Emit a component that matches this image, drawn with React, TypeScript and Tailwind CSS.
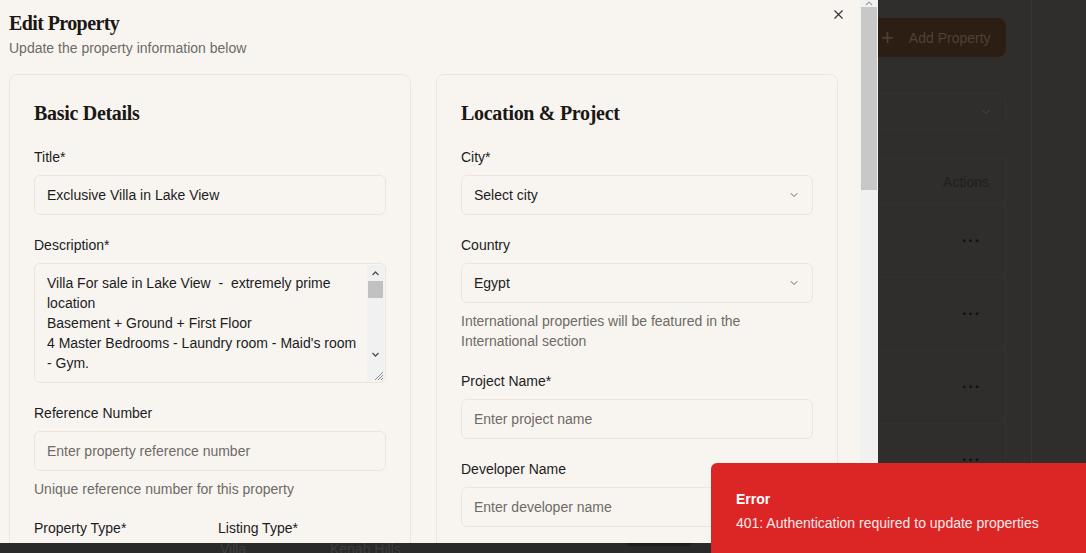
import React from 'react'

const sans = { fontFamily: '"Liberation Sans", Arial, sans-serif' }
const serif = { fontFamily: '"Liberation Serif", "Times New Roman", serif' }

const Chevron = () => (
  <svg width="12" height="12" viewBox="0 0 24 24" fill="none" stroke="#6b6b6b" strokeWidth="2" strokeLinecap="round" strokeLinejoin="round">
    <path d="m6 9 6 6 6-6" />
  </svg>
)

const Label = ({ children }: { children: React.ReactNode }) => (
  <div className='text-sm leading-5 text-[#1c1c1c] mb-2'>{children}</div>
)

const Input = ({ value, placeholder }: { value?: string; placeholder?: string }) => (
  <div className='h-10 rounded-md border border-[#ebe5de] bg-[#f8f5f1] px-3 flex items-center text-sm'>
    {value ? <span className='text-[#1c1c1c]'>{value}</span> : <span className='text-[#6e6a66]'>{placeholder}</span>}
  </div>
)

const Select = ({ value }: { value: string }) => (
  <div className='h-10 rounded-md border border-[#ebe5de] bg-[#f8f5f1] px-3 flex items-center justify-between text-sm text-[#1c1c1c]'>
    <span>{value}</span>
    <Chevron />
  </div>
)

const Help = ({ children }: { children: React.ReactNode }) => (
  <div className='text-sm leading-5 text-[#6e6a66] mt-2'>{children}</div>
)

const Description = () => (
  <div className='relative h-[120px] rounded-md border border-[#ebe5de] bg-[#f8f5f1] flex overflow-hidden'>
    <div className='flex-1 pl-3 pt-[9px] text-sm leading-5 text-[#1c1c1c] whitespace-pre'>
      {'Villa For sale in Lake View  -  extremely prime\nlocation\nBasement + Ground + First Floor\n4 Master Bedrooms - Laundry room - Maid\'s room\n- Gym.'}
    </div>
    <div className='w-[17px] mt-[1px] mb-[1px] mr-[1px] flex flex-col items-center bg-[#f1f1f1]'>
      <svg width="9" height="16" viewBox="0 0 9 16"><path d="M1.5 10 4.5 7 7.5 10" fill="none" stroke="#505050" strokeWidth="1.3" /></svg>
      <div className='w-[15px] h-[17px] bg-[#c1c1c1]' />
      <div className='flex-1' />
      <svg width="9" height="16" viewBox="0 0 9 16" className='mb-[18px]'><path d="M1.5 6 4.5 9 7.5 6" fill="none" stroke="#505050" strokeWidth="1.3" /></svg>
    </div>
    <svg width="12" height="12" viewBox="0 0 12 12" className='absolute right-[1px] bottom-[1px]'>
      <path d="M11 3 3 11M11 6 6 11M11 9 9 11" stroke="#8a8a8a" strokeWidth="1" />
    </svg>
  </div>
)

const Card = ({ title, children }: { title: string; children: React.ReactNode }) => (
  <div className='rounded-lg border border-[#ece6df] bg-[#f8f5f1] px-6 pt-6 pb-6'>
    <h3 style={serif} className='text-[20px] leading-7 font-bold text-[#1a1714] mb-5 tracking-[-0.3px]'>{title}</h3>
    <div className='flex flex-col gap-5'>{children}</div>
  </div>
)

export default function App() {
  return (
    <div style={sans} className='relative w-[1086px] h-[553px] overflow-hidden bg-[#2f2e2d]'>
      <div className='flex h-[543px]'>
        <div className='w-[878px] flex bg-[#f8f5f1] shrink-0'>
          <div className='w-[860px] h-[543px] overflow-hidden relative pl-[9px] pr-[22px]'>
            <svg width="15" height="15" viewBox="0 0 24 24" fill="none" stroke="#333" strokeWidth="1.8" strokeLinecap="round" className='absolute left-[831px] top-[7px]'>
              <path d="M18 6 6 18M6 6l12 12" />
            </svg>
            <h2 style={serif} className='text-[20px] leading-7 font-bold text-[#1a1714] mt-[9px] tracking-[-0.6px]'>Edit Property</h2>
            <p className='text-sm leading-5 text-[#6e6a66] mt-[1px]'>Update the property information below</p>
            <div className='grid grid-cols-2 gap-[25px] mt-[16px]'>
              <Card title='Basic Details'>
                <div>
                  <Label>Title*</Label>
                  <Input value='Exclusive Villa in Lake View' />
                </div>
                <div>
                  <Label>Description*</Label>
                  <Description />
                </div>
                <div>
                  <Label>Reference Number</Label>
                  <Input placeholder='Enter property reference number' />
                  <Help>Unique reference number for this property</Help>
                </div>
                <div className='grid grid-cols-2 gap-4 -mt-[1px]'>
                  <div>
                    <Label>Property Type*</Label>
                    <Select value='Villa' />
                  </div>
                  <div>
                    <Label>Listing Type*</Label>
                    <Select value='Sale' />
                  </div>
                </div>
              </Card>
              <Card title='Location & Project'>
                <div>
                  <Label>City*</Label>
                  <Select value='Select city' />
                </div>
                <div>
                  <Label>Country</Label>
                  <Select value='Egypt' />
                  <Help>International properties will be featured in the<br />International section</Help>
                </div>
                <div>
                  <Label>Project Name*</Label>
                  <Input placeholder='Enter project name' />
                </div>
                <div>
                  <Label>Developer Name</Label>
                  <Input placeholder='Enter developer name' />
                </div>
              </Card>
            </div>
          </div>
          <div className='w-[18px] h-[543px] bg-[#f1f1f1] flex flex-col items-center'>
            <svg width="10" height="7" viewBox="0 0 10 7"><path d="M2 5 5 2 8 5" fill="none" stroke="#a3a3a3" strokeWidth="1.2" /></svg>
            <div className='w-[16px] h-[183px] bg-[#c8c8c8]' />
          </div>
        </div>
        <div className='flex-1 relative'>
          <div className='absolute top-0 bottom-0 left-[153px] w-px bg-[#363534]' />
          <div className='pr-[80px]'>
            <div className='mt-[18px] h-[39px] rounded-r-lg bg-[#2c1e13] flex items-center text-sm text-[#4d4239]'>
              <span className='ml-[3px] text-[22px] leading-none font-light text-[#4d4239]'>+</span>
              <span className='ml-[15px]'>Add Property</span>
            </div>
            <div className='mt-[36px] h-[37px] border-y border-r border-[#333231] rounded-r-md flex items-center justify-end pr-[13px]'>
              <svg width="12" height="12" viewBox="0 0 24 24" fill="none" stroke="#4d4a47" strokeWidth="2" strokeLinecap="round"><path d="m6 9 6 6 6-6" /></svg>
            </div>
            <div className='mt-[28px] border-r border-[#333231]'>
              <div className='h-[47px] border-y border-[#333231] flex items-center justify-end pr-[16px] text-sm text-[#1f1e1d]'>Actions</div>
              {[0, 1, 2, 3].map(i => (
                <div key={i} className='h-[73px] border-b border-[#323130] flex items-center justify-end pr-[24px]'>
                  <span className='text-[#0f0f0f] font-bold text-base leading-none tracking-[1px]'>···</span>
                </div>
              ))}
            </div>
          </div>
        </div>
      </div>
      <div className='h-[10px] bg-[#2a2a2a] relative text-sm text-[#3e3d3c]'>
        <span className='absolute left-[220px] -top-[4px] leading-5'>Villa</span>
        <span className='absolute left-[330px] -top-[4px] leading-5'>Kenab Hills</span>
        <div className='absolute left-[627px] top-0 w-[64px] h-[3px] rounded-b-md bg-[#1f1f1f]' />
      </div>
      <div className='absolute left-[711px] top-[463px] w-[400px] h-[100px] bg-[#dc2626] rounded-tl-md pl-[25px] pt-[26px] text-white text-sm leading-5'>
        <div className='font-bold'>Error</div>
        <div className='mt-[4px] text-[#fbe9e9]'>401: Authentication required to update properties</div>
      </div>
    </div>
  )
}
